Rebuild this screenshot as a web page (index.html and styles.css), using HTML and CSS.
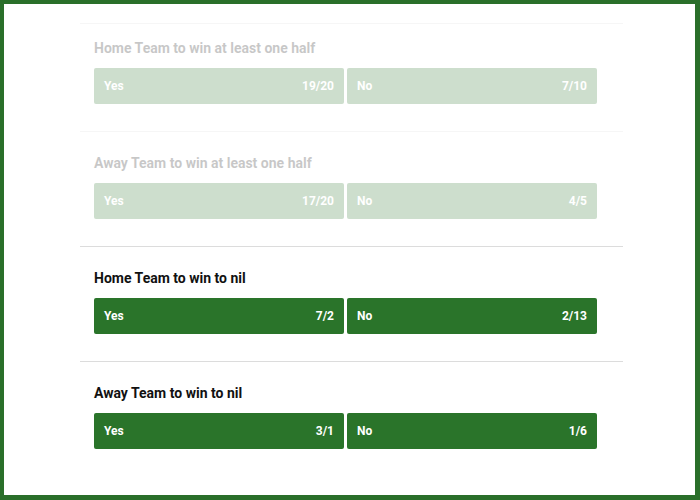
FILE: index.html
```html
<!DOCTYPE html>
<html lang="en">
<head>
    <meta charset="UTF-8">
    <title>Match Markets</title>
    <link rel="stylesheet" href="styles.css">
</head>
<body>
    <div class="frame">
        <div class="markets">
            <div class="market suspended">
                <h3>Home Team to win at least one half</h3>
                <div class="options">
                    <div class="option"><span>Yes</span><span class="odds">19/20</span></div>
                    <div class="option"><span>No</span><span class="odds">7/10</span></div>
                </div>
            </div>
            <div class="market suspended">
                <h3>Away Team to win at least one half</h3>
                <div class="options">
                    <div class="option"><span>Yes</span><span class="odds">17/20</span></div>
                    <div class="option"><span>No</span><span class="odds">4/5</span></div>
                </div>
            </div>
            <div class="market">
                <h3>Home Team to win to nil</h3>
                <div class="options">
                    <div class="option"><span>Yes</span><span class="odds">7/2</span></div>
                    <div class="option"><span>No</span><span class="odds">2/13</span></div>
                </div>
            </div>
            <div class="market">
                <h3>Away Team to win to nil</h3>
                <div class="options">
                    <div class="option"><span>Yes</span><span class="odds">3/1</span></div>
                    <div class="option"><span>No</span><span class="odds">1/6</span></div>
                </div>
            </div>
        </div>
    </div>
</body>
</html>
```

FILE: styles.css
```css
body {
    margin: 0;
    background-color: #fff;
    font-family: Roboto, "Liberation Sans", Arial, sans-serif;
}
.frame {
    box-sizing: border-box;
    width: 700px;
    height: 500px;
    border-style: solid;
    border-color: #2a6f2a;
    border-width: 4px 5px 5px 4px;
    padding: 19px 0 0 76px;
    overflow: hidden;
}
.markets {
    width: 543px;
}
.market {
    border-top: 1px solid #dcdcdc;
    padding: 21px 26px 27px 14px;
}
.market:first-child {
    padding-top: 14px;
}
.market.suspended {
    opacity: 0.23;
}
h3 {
    margin: 0 0 10px;
    font-size: 14px;
    line-height: 20px;
    font-weight: 700;
    color: #111;
}
.options {
    display: flex;
    gap: 3px;
}
.option {
    flex: 1;
    height: 36px;
    display: flex;
    align-items: center;
    justify-content: space-between;
    padding: 0 10px;
    background-color: #2a742a;
    border-radius: 2px;
    color: #fff;
    font-size: 12px;
    font-weight: 700;
}
```
